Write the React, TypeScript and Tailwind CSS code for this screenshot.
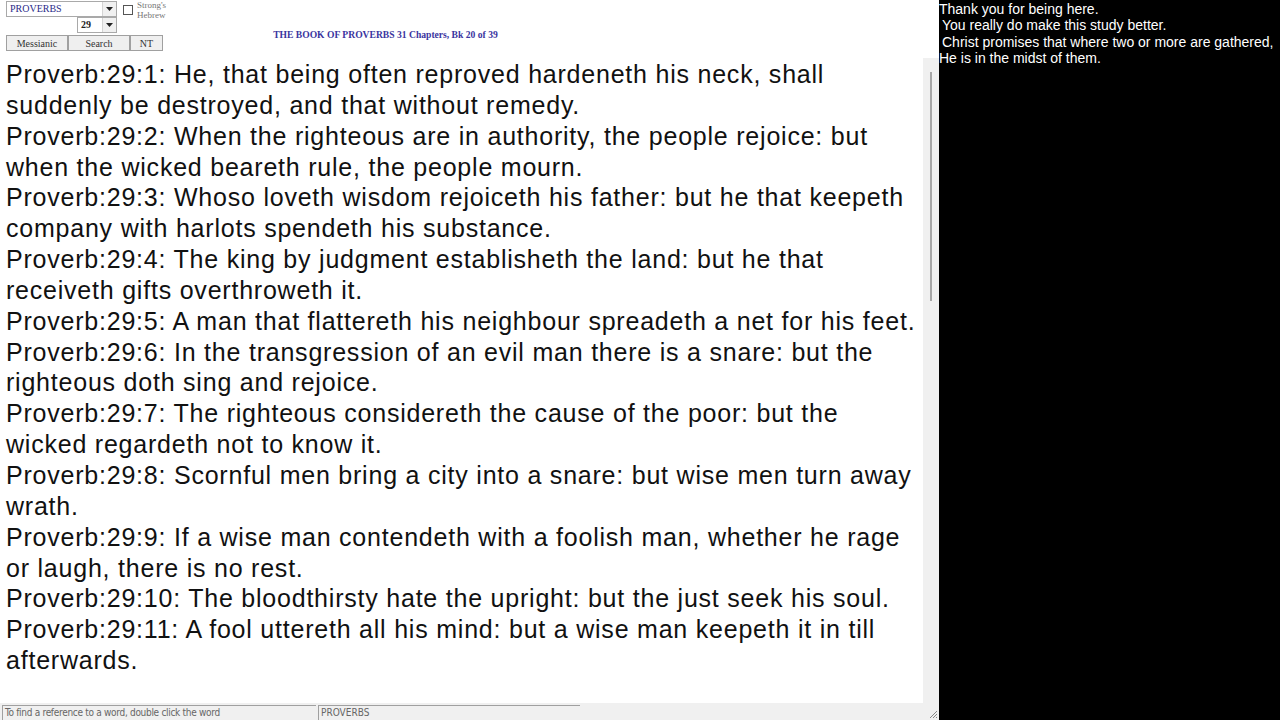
const verses = [
  "Proverb:29:1: He, that being often reproved hardeneth his neck, shall suddenly be destroyed, and that without remedy.",
  "Proverb:29:2: When the righteous are in authority, the people rejoice: but when the wicked beareth rule, the people mourn.",
  "Proverb:29:3: Whoso loveth wisdom rejoiceth his father: but he that keepeth company with harlots spendeth his substance.",
  "Proverb:29:4: The king by judgment establisheth the land: but he that receiveth gifts overthroweth it.",
  "Proverb:29:5: A man that flattereth his neighbour spreadeth a net for his feet.",
  "Proverb:29:6: In the transgression of an evil man there is a snare: but the righteous doth sing and rejoice.",
  "Proverb:29:7: The righteous considereth the cause of the poor: but the wicked regardeth not to know it.",
  "Proverb:29:8: Scornful men bring a city into a snare: but wise men turn away wrath.",
  "Proverb:29:9: If a wise man contendeth with a foolish man, whether he rage or laugh, there is no rest.",
  "Proverb:29:10: The bloodthirsty hate the upright: but the just seek his soul.",
  "Proverb:29:11: A fool uttereth all his mind: but a wise man keepeth it in till afterwards.",
];

const serif = "'Liberation Serif', 'DejaVu Serif', serif";

function Arrow() {
  return (
    <div className="flex h-full w-[14px] items-center justify-center border-l border-[#d4d4d4] bg-[#f0f0f0]">
      <svg width="7" height="4" viewBox="0 0 7 4">
        <path d="M0 0h7L3.5 4z" fill="#222" />
      </svg>
    </div>
  );
}

function FakeSelect({ value, width, bold }: { value: string; width: string; bold?: boolean }) {
  return (
    <div className={`flex h-[16px] ${width} items-stretch border border-[#a9a9a9] bg-white`}>
      <div
        className={`flex-1 pl-[3px] text-[10px] leading-[14px] ${bold ? "font-bold text-[#222]" : "text-[#2a2a8a]"}`}
        style={{ fontFamily: serif }}
      >
        {value}
      </div>
      <Arrow />
    </div>
  );
}

function Btn({ label, width }: { label: string; width: string }) {
  return (
    <div
      className={`flex h-[16px] ${width} items-center justify-center border border-[#a0a0a0] bg-[#efefef] text-[10px] text-[#333]`}
      style={{ fontFamily: serif }}
    >
      {label}
    </div>
  );
}

export default function App() {
  return (
    <div className="flex h-[720px] w-[1280px] overflow-hidden bg-black">
      {/* Left window */}
      <div className="flex h-full w-[939px] flex-col bg-[#f0f0f0]">
        {/* Header controls */}
        <div className="flex h-[58px] bg-white">
          <div className="flex flex-col pl-[6px] pt-[1px]">
            <div className="flex items-start">
              <FakeSelect value="PROVERBS" width="w-[111px]" />
              <div className="ml-[6px] mt-[4px] h-[10px] w-[10px] border border-[#555] bg-white" />
              <div className="ml-[4px] mt-[-1px] text-[9px] leading-[10px] text-[#777]" style={{ fontFamily: serif }}>
                Strong's
                <br />
                Hebrew
              </div>
            </div>
            <div className="ml-[71px] mt-[-3px]">
              <FakeSelect value="29" width="w-[40px]" bold />
            </div>
            <div className="mt-[2px] flex">
              <Btn label="Messianic" width="w-[62px]" />
              <Btn label="Search" width="w-[62px]" />
              <Btn label="NT" width="w-[33px]" />
            </div>
          </div>
          <div className="ml-[107px] mt-[28px] text-[9.6px] font-bold text-[#3a35a0]" style={{ fontFamily: serif }}>
            THE BOOK OF PROVERBS 31 Chapters, Bk 20 of 39
          </div>
        </div>

        {/* Text area + scrollbar */}
        <div className="flex flex-1 overflow-hidden">
          <div className="flex-1 overflow-hidden bg-white pl-[6px] pr-[2px] pt-[1px]">
            <div
              className="text-[25px] leading-[30.85px] tracking-[0.78px] text-[#111]"
              style={{ fontFamily: "Arial, 'Liberation Sans', sans-serif" }}
            >
              {verses.map((v) => (
                <div key={v}>{v}</div>
              ))}
            </div>
          </div>
          <div className="flex w-[16px] justify-center bg-[#f0f0f0] pt-[14px]">
            <div className="h-[229px] w-[2px] bg-[#a6a6a6]" />
          </div>
        </div>

        {/* Status bar */}
        <div
          className="flex h-[17px] items-end gap-[2px] pl-[2px] text-[10px] text-[#666]"
          style={{ fontFamily: "Tahoma, 'DejaVu Sans Condensed', 'Liberation Sans', sans-serif" }}
        >
          <div className="h-[15px] w-[314px] border-l border-t border-[#a0a0a0] pl-[2px] leading-[14px] tracking-[-0.3px]">
            To find a reference to a word, double click the word
          </div>
          <div className="h-[15px] w-[262px] border-l border-t border-[#a0a0a0] pl-[2px] leading-[14px]">
            PROVERBS
          </div>
          <div className="relative flex-1">
            <svg className="absolute bottom-[1px] right-[1px]" width="10" height="10" viewBox="0 0 10 10">
              <path d="M9 2L2 9M9 5L5 9M9 8L8 9" stroke="#888" strokeWidth="1" />
            </svg>
          </div>
        </div>
      </div>

      {/* Right black panel */}
      <div
        className="flex-1 pt-[1px] text-[14px] leading-[16.3px] text-white"
        style={{ fontFamily: "Arial, 'Liberation Sans', sans-serif" }}
      >
        <div>Thank you for being here.</div>
        <div className="pl-[3px]">You really do make this study better.</div>
        <div className="pl-[3px]">Christ promises that where two or more are gathered,</div>
        <div>He is in the midst of them.</div>
      </div>
    </div>
  );
}
